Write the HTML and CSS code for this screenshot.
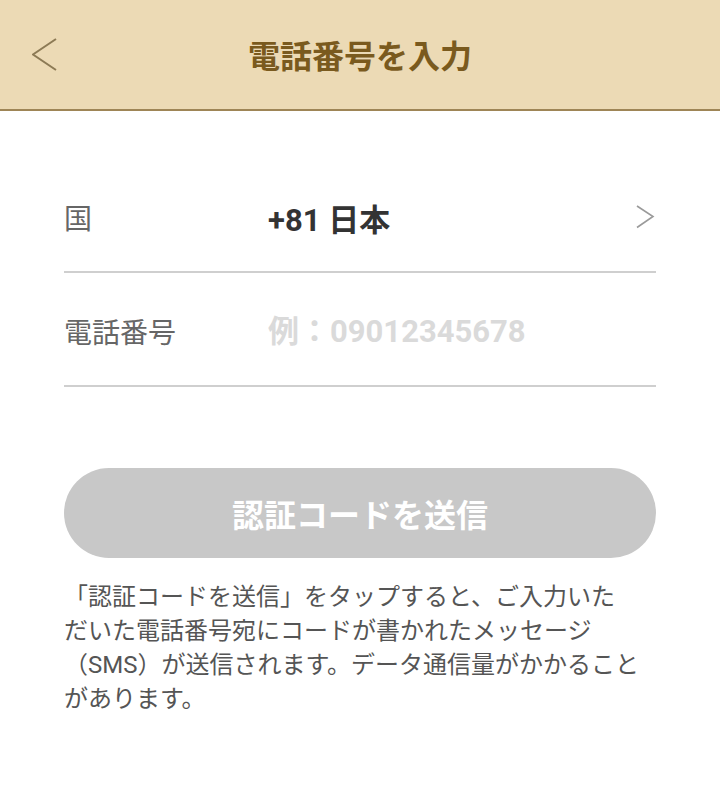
FILE: index.html
```html
<!DOCTYPE html>
<html lang="ja">
<head>
    <meta charset="UTF-8">
    <meta name="viewport" content="width=device-width, initial-scale=1.0">
    <title>電話番号を入力</title>
    <link rel="stylesheet" href="styles.css">
</head>
<body>
    <header class="topbar">
        <button class="back-btn" type="button" aria-label="戻る">
            <svg width="26" height="34" viewBox="0 0 26 34">
                <path d="M24 1 L1 16.5 L24 32" fill="none" stroke="#8c7a55" stroke-width="2"/>
            </svg>
        </button>
        <h1 class="topbar-title">電話番号を入力</h1>
        <span></span>
    </header>

    <main class="content">
        <div class="field">
            <span class="field-label">国</span>
            <span class="field-value">+81 日本</span>
            <svg class="field-arrow" width="20" height="26" viewBox="0 0 20 26">
                <path d="M2 2 L18 12.5 L2 23.5" fill="none" stroke="#9a9a9a" stroke-width="1.6"/>
            </svg>
        </div>
        <div class="field">
            <label class="field-label" for="tel">電話番号</label>
            <input class="field-input" type="tel" id="tel" name="tel" placeholder="例：09012345678">
        </div>

        <button class="send-btn" type="button" disabled>認証コードを送信</button>

        <p class="note">「認証コードを送信」をタップすると、ご入力いた<br>だいた電話番号宛にコードが書かれたメッセージ<br>（SMS）が送信されます。データ通信量がかかること<br>があります。</p>
    </main>
</body>
</html>
```

FILE: styles.css
```css
body {
    margin: 0;
    background: #fff;
    font-family: Roboto, "Noto Sans CJK JP", sans-serif;
}
.topbar {
    display: grid;
    grid-template-columns: 1fr auto 1fr;
    align-items: center;
    height: 111px;
    background-color: #ecdab5;
    border-bottom: 2px solid #9e8556;
    box-sizing: border-box;
}
.back-btn {
    justify-self: start;
    display: flex;
    margin-left: 32px;
    padding: 0;
    background: none;
    border: none;
    cursor: pointer;
}
.topbar-title {
    margin: 0 0 2px 0;
    font-size: 32px;
    font-weight: bold;
    color: #7a5a1e;
}
.content {
    padding: 48px 64px 0 64px;
}
.field {
    display: grid;
    grid-template-columns: 204px 1fr auto;
    align-items: center;
    height: 114px;
    padding-top: 4px;
    border-bottom: 2px solid #cfcfcf;
    box-sizing: border-box;
}
.field-label {
    font-size: 28px;
    color: #666;
}
.field-value {
    font-size: 31px;
    font-weight: bold;
    color: #333;
}
.field-arrow {
    margin-right: 1px;
}
.field-input {
    width: 100%;
    padding: 0;
    border: none;
    outline: none;
    font-family: inherit;
    font-size: 31px;
    font-weight: bold;
    color: #333;
}
.field-input::placeholder {
    color: #dadada;
}
.send-btn {
    display: block;
    width: 100%;
    height: 90px;
    margin-top: 81px;
    background-color: #c8c8c8;
    border: none;
    border-radius: 45px;
    font-family: inherit;
    font-size: 32px;
    font-weight: bold;
    color: #fff;
}
.note {
    margin: 22px 0 0 0;
    font-size: 24px;
    line-height: 34px;
    color: #555;
}
```
